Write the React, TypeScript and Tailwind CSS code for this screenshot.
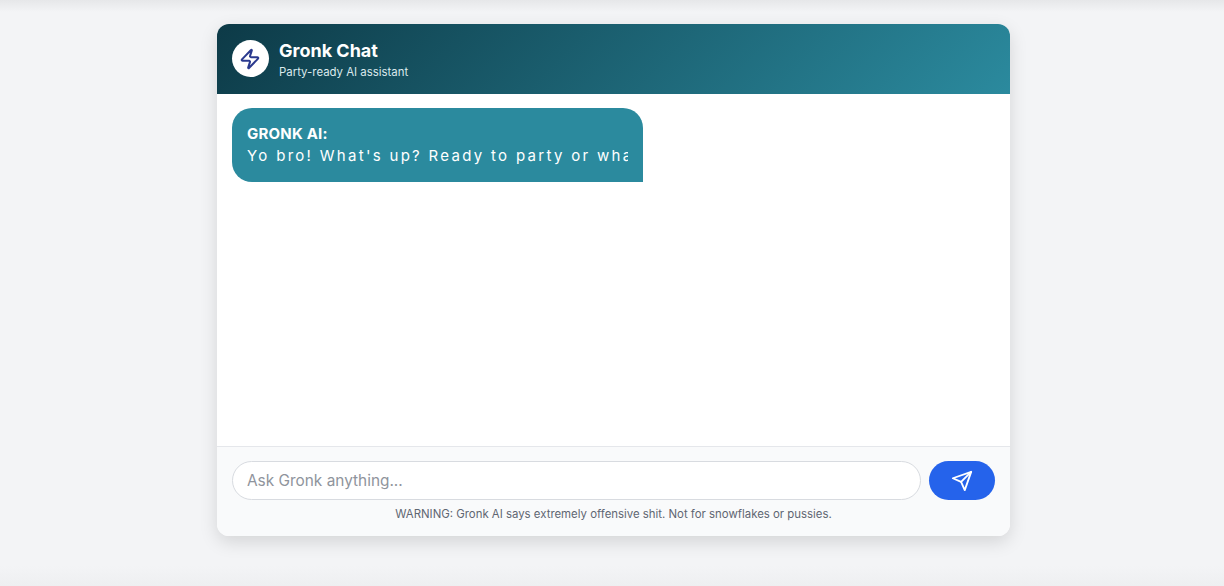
const App = () => {
  return (
    <div className="relative h-[586px] overflow-hidden bg-[#f3f4f6] pt-6 font-['Inter','Liberation_Sans',sans-serif]">
      <div className="absolute inset-x-0 top-0 h-3 bg-gradient-to-b from-[#e6e7e9] to-[#f3f4f6]" aria-hidden="true"></div>
      <div className="absolute inset-x-0 bottom-0 h-5 bg-gradient-to-t from-[#eeeff1] to-[#f3f4f6]" aria-hidden="true"></div>

      <div className="relative ml-[217px] flex h-[512px] w-[793px] flex-col overflow-hidden rounded-xl bg-white shadow-[0_6px_18px_rgba(0,0,0,0.13)]">
        <header className="flex h-[70px] items-center gap-[10px] bg-[linear-gradient(135deg,#0d3a47,#2b8a9e)] px-[15px] pb-px">
          <div className="flex h-[37px] w-[37px] items-center justify-center rounded-full bg-white">
            <svg className="-ml-[1px]" width="22" height="22" viewBox="0 0 24 24" fill="none" stroke="#2b3a8f" strokeWidth="2.2" strokeLinecap="round" strokeLinejoin="round">
              <path d="M4 14a1 1 0 0 1-.78-1.63l9.9-10.2a.5.5 0 0 1 .86.46l-1.92 6.02A1 1 0 0 0 13 10h7a1 1 0 0 1 .78 1.63l-9.9 10.2a.5.5 0 0 1-.86-.46l1.92-6.02A1 1 0 0 0 11 14z" />
            </svg>
          </div>
          <div className="mt-[3px]">
            <h1 className="text-[18px] font-bold leading-[22px] text-white">Gronk Chat</h1>
            <p className="mt-[2px] text-[11.4px] leading-[16px] text-[#dbe9ed]">Party-ready AI assistant</p>
          </div>
        </header>

        <main className="flex-1 px-[15px] py-[14px]">
          <div className="h-[74px] w-[411px] overflow-hidden rounded-[20px] rounded-br-none bg-[#2b8a9e] px-[15px] py-[14px] text-white">
            <div className="overflow-hidden">
              <p className="text-[15px] font-bold leading-[23px] tracking-[0.2px]">GRONK AI:</p>
              <p className="whitespace-nowrap text-[15px] leading-[22px] tracking-[2.3px]">Yo bro! What's up? Ready to party or what?</p>
            </div>
          </div>
        </main>

        <footer className="h-[90px] border-t border-[#e5e7eb] bg-[#f9fafb] px-[15px] pt-[14px]">
          <div className="flex items-center gap-2">
            <input
              readOnly
              placeholder="Ask Gronk anything..."
              className="h-[39px] flex-1 rounded-full border border-[#d8dbe0] bg-white pl-[14px] pr-[15px] pb-px text-[15.4px] outline-none placeholder:text-[#8f949c]"
            />
            <button className="flex h-[39px] w-[66px] items-center justify-center rounded-full bg-[#2563eb]">
              <svg width="22" height="22" viewBox="0 0 24 24" fill="none" stroke="white" strokeWidth="2" strokeLinecap="round" strokeLinejoin="round">
                <line x1="22" y1="2" x2="11" y2="13" />
                <polygon points="22 2 15 22 11 13 2 9 22 2" />
              </svg>
            </button>
          </div>
          <p className="mt-[6px] text-center text-[11.4px] leading-[16px] text-[#5f6672]">
            WARNING: Gronk AI says extremely offensive shit. Not for snowflakes or pussies.
          </p>
        </footer>
      </div>
    </div>
  );
};

export default App;
